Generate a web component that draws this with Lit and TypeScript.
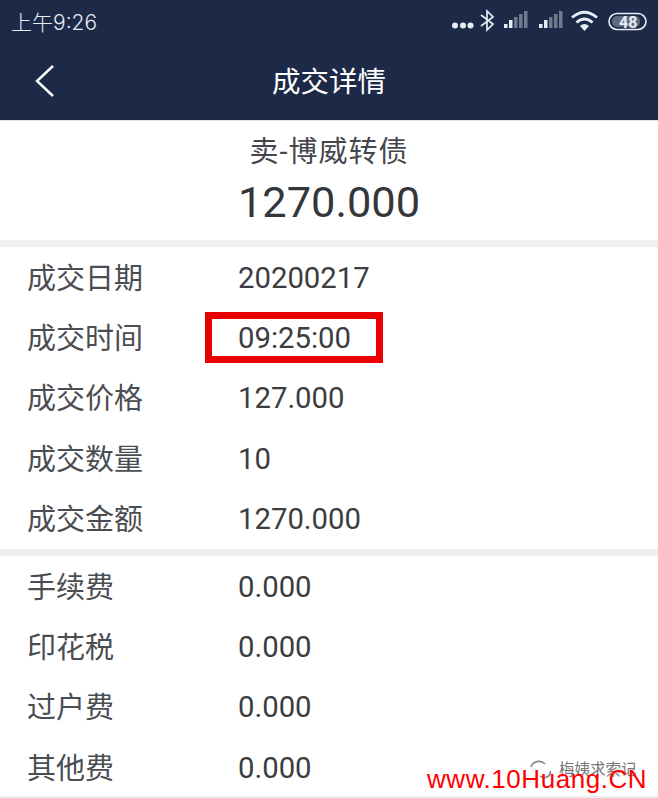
import { LitElement, html, css } from "lit";
import { customElement } from "lit/decorators.js";

const sec1 = [
  ["成交日期", "20200217"],
  ["成交时间", "09:25:00"],
  ["成交价格", "127.000"],
  ["成交数量", "10"],
  ["成交金额", "1270.000"],
];
const sec2 = [
  ["手续费", "0.000"],
  ["印花税", "0.000"],
  ["过户费", "0.000"],
  ["其他费", "0.000"],
];

@customElement("app-root")
export class AppRoot extends LitElement {
  static styles = css`
    :host {
      display: block;
      position: relative;
      width: 658px;
      height: 798px;
      overflow: hidden;
      background: #fff;
      font-family: Roboto, "Noto Sans CJK SC", sans-serif;
      color: #3a3d42;
    }
    .top { background: #1d2a47; height: 120px; border-bottom: 1px solid #dfe3e8; box-sizing: content-box; }
    .status { height: 41px; display: flex; align-items: center; justify-content: space-between; padding: 0 11px; color: #e6ebf4; }
    .time { font-size: 21px; font-family: Inter, "Noto Sans CJK SC", sans-serif; font-weight: 300; }
    .icons { display: flex; align-items: center; }
    .nav { height: 79px; display: flex; align-items: center; justify-content: center; position: relative; color: #fff; font-size: 28.5px; padding-bottom: 3px; box-sizing: border-box; }
    .back { position: absolute; left: 33px; top: 22px; }
    .head { height: 119px; display: flex; flex-direction: column; align-items: center; padding-top: 12px; box-sizing: border-box; }
    .name { font-size: 29px; line-height: 38px; color: #44474c; letter-spacing: 1px; }
    .amount { font-size: 43.4px; line-height: 64px; color: #33363b; }
    .sep { height: 7px; background: #eeeff1; }
    .list { display: flex; flex-direction: column; }
    .row { height: 60.4px; display: flex; align-items: center; padding-left: 27px; position: relative; }
    .label { width: 211px; color: #4a4d52; font-size: 29px; padding-bottom: 3px; }
    .value { color: #3a3d42; font-size: 29.3px; padding-top: 1px; }
    .mark { position: absolute; left: 205px; top: 312px; width: 178px; height: 51px; border: 7px solid #ea0000; box-sizing: border-box; }
    .wm-grey { position: absolute; left: 559px; top: 757px; font-size: 15.5px; color: #777; white-space: nowrap; }
    .wm-icon { position: absolute; left: 528px; top: 759px; }
    .wm { position: absolute; left: 427px; top: 763px; font-size: 26px; line-height: 32px; color: #ff0000; font-family: "Liberation Sans", sans-serif; white-space: nowrap; letter-spacing: 0.55px; }
    .end { position: absolute; left: 0; right: 0; top: 796px; height: 2px; background: #eeeff1; }
  `;

  row(r: string[]) {
    return html`<div class="row"><span class="label">${r[0]}</span><span class="value">${r[1]}</span></div>`;
  }

  render() {
    return html`
      <div class="top">
        <div class="status">
          <span class="time">上午9:26</span>
          <span class="icons">
            <svg width="205" height="30" viewBox="0 0 205 30">
              <g fill="#e8edf5">
                <circle cx="13" cy="19.5" r="3"/><circle cx="21" cy="19.5" r="3"/><circle cx="28.5" cy="19.5" r="3"/>
              </g>
              <path d="M39 9 L51 18 L45 24 V5 L51 11 L39 20" fill="none" stroke="#e8edf5" stroke-width="1.7"/>
              <g fill="#e8edf5"><rect x="62" y="18" width="3.5" height="4"/><rect x="67" y="14" width="3.5" height="8"/></g>
              <g fill="#6f7a90"><rect x="72" y="11" width="3.5" height="11"/><rect x="77" y="8" width="3.5" height="14"/><rect x="82" y="5" width="3.5" height="17"/></g>
              <g fill="#e8edf5"><rect x="97" y="18" width="3.5" height="4"/><rect x="102" y="14" width="3.5" height="8"/></g>
              <g fill="#6f7a90"><rect x="107" y="11" width="3.5" height="11"/><rect x="112" y="8" width="3.5" height="14"/><rect x="117" y="5" width="3.5" height="17"/></g>
              <g fill="none" stroke="#e8edf5" stroke-width="2.8">
                <path d="M130 11.500 Q142.500 1 155 11.500"/><path d="M134.500 16.500 Q142.500 9.500 150.500 16.500"/>
              </g>
              <path d="M142.500 25 L138 20 Q142.500 16 147 20 Z" fill="#e8edf5"/>
              <rect x="167" y="7.500" width="37" height="16" rx="8" fill="#1d2a47" stroke="#e8edf5" stroke-width="1.6"/>
              <rect x="170" y="10" width="28" height="11" rx="5" fill="#5f6a80"/>
              <text x="177" y="21.500" font-size="16" font-weight="700" fill="#e8edf5" font-family="Roboto, sans-serif">48</text>
            </svg>
          </span>
        </div>
        <div class="nav">
          <svg class="back" width="24" height="36" viewBox="0 0 24 36"><path d="M20 3 L4 18 L20 33" fill="none" stroke="#fff" stroke-width="2.4"/></svg>
          成交详情
        </div>
      </div>
      <div class="head">
        <div class="name">卖-博威转债</div>
        <div class="amount">1270.000</div>
      </div>
      <div class="sep"></div>
      <div class="list">${sec1.map((r) => this.row(r))}</div>
      <div class="sep"></div>
      <div class="list">${sec2.map((r) => this.row(r))}</div>
      <div class="mark"></div>
      <div class="end"></div>
      <svg class="wm-icon" width="26" height="22" viewBox="0 0 26 22"><path d="M3 8 A8 7 0 0 1 17 5 M22 12 A6 5 0 0 1 12 17" fill="none" stroke="#888" stroke-width="1.6"/></svg>
      <div class="wm-grey">梅姨求索记</div>
      <div class="wm">www.10Huang.CN</div>
    `;
  }
}
